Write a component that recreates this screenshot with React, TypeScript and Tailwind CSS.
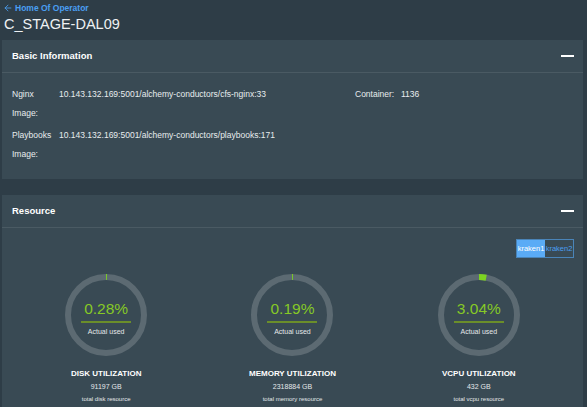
import { ArrowLeft } from "lucide-react";

type Gauge = {
  label: string;
  percent: number;
  total: string;
  caption: string;
};

const gauges: Gauge[] = [
  { label: "DISK UTILIZATION", percent: 0.28, total: "91197 GB", caption: "total disk resource" },
  { label: "MEMORY UTILIZATION", percent: 0.19, total: "2318884 GB", caption: "total memory resource" },
  { label: "VCPU UTILIZATION", percent: 3.04, total: "432 GB", caption: "total vcpu resource" },
];

/* ================= PANEL HEADER ================= */
function PanelHeader({ title }: { title: string }) {
  return (
    <div className="flex h-[33px] items-center justify-between border-b border-[#4a5a63] pl-[10px] pr-[9px]">
      <h2 className="text-[9.5px] font-bold text-white">{title}</h2>
      <span className="block h-[2px] w-[13px] bg-white" />
    </div>
  );
}

/* ================= DONUT ================= */
function Donut({ g }: { g: Gauge }) {
  const r = 38;
  const c = 2 * Math.PI * r;
  const arc = Math.max((g.percent / 100) * c, 0.9);
  return (
    <div className="flex flex-col items-center">
      <div className="relative h-[82px] w-[82px]">
        <svg width="82" height="82" viewBox="0 0 82 82" className="absolute inset-0">
          <circle cx="41" cy="41" r={r} fill="none" stroke="#5c6a72" strokeWidth="6" />
          <circle
            cx="41"
            cy="41"
            r={r}
            fill="none"
            stroke="#7dd321"
            strokeWidth="6"
            strokeDasharray={`${arc} ${c}`}
            transform="rotate(-90 41 41)"
          />
        </svg>
        <div className="absolute inset-0 flex flex-col items-center pt-[26px]">
          <span className="text-[15.5px] leading-[17px] text-[#86c926]">{g.percent.toFixed(2)}%</span>
          <span className="mt-[4px] block h-[2px] w-[50px] bg-[#6b8e2a]" />
          <span className="mt-[4px] text-[7px] text-[#e4e8ea]">Actual used</span>
        </div>
      </div>
      <div className="mt-[12px] text-[8px] font-bold text-white">{g.label}</div>
      <div className="mt-[2px] text-[7px] text-[#e4e8ea]">{g.total}</div>
      <div className="mt-[2px] text-[6px] text-[#e4e8ea]">{g.caption}</div>
    </div>
  );
}

export default function App() {
  return (
    <div className="h-[407px] w-[587px] overflow-hidden bg-[#2e3d47] font-['Liberation_Sans',Arial,sans-serif]">
      {/* ================= PAGE HEADER ================= */}
      <div className="px-[3px] pt-[2px]">
        <a className="flex items-center gap-[2px] text-[8.5px] font-bold leading-[12px] text-[#4a9ff2]">
          <ArrowLeft size={10} strokeWidth={2} />
          Home Of Operator
        </a>
        <h1 className="pl-[1px] text-[14.5px] leading-[20px] text-[#eef1f3]">C_STAGE-DAL09</h1>
      </div>

      {/* ================= BASIC INFORMATION ================= */}
      <section className="ml-[2px] mt-[6px] h-[139px] w-[581px] bg-[#394a54]">
        <PanelHeader title="Basic Information" />
        <div className="flex pl-[10px] pt-[12px] text-[8.5px] leading-[19px] text-[#e8ecee]">
          <div className="flex w-[343px] flex-col gap-[3px]">
            <div className="flex">
              <span className="w-[47px]">
                Nginx
                <br />
                Image:
              </span>
              <span>10.143.132.169:5001/alchemy-conductors/cfs-nginx:33</span>
            </div>
            <div className="flex">
              <span className="w-[47px]">
                Playbooks
                <br />
                Image:
              </span>
              <span>10.143.132.169:5001/alchemy-conductors/playbooks:171</span>
            </div>
          </div>
          <div className="flex">
            <span className="w-[46px]">Container:</span>
            <span>1136</span>
          </div>
        </div>
      </section>

      {/* ================= RESOURCE ================= */}
      <section className="ml-[2px] mt-[16px] h-[220px] w-[581px] bg-[#394a54]">
        <PanelHeader title="Resource" />
        <div className="flex justify-end pr-[9px] pt-[11px]">
          <div className="flex h-[19px] border border-[#4a84b8] text-[7.5px]">
            <span className="flex w-[28px] items-center justify-center bg-[#5aabf6] text-white">kraken1</span>
            <span className="flex w-[28px] items-center justify-center text-[#4a9ff2]">kraken2</span>
          </div>
        </div>
        <div className="mt-[16px] grid grid-cols-3 px-[11px]">
          {gauges.map((g) => (
            <Donut key={g.label} g={g} />
          ))}
        </div>
      </section>
    </div>
  );
}
